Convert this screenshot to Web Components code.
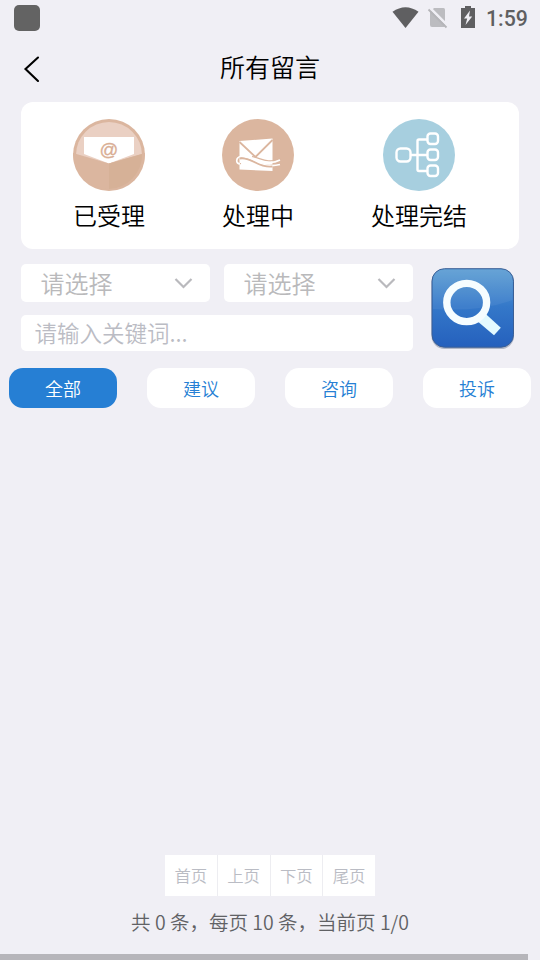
<!DOCTYPE html>
<html lang="zh-CN">
<head>
<meta charset="utf-8">
<title>所有留言</title>
<style>
html,body{margin:0;height:100%}
body{background:#f0eff5;font-family:"Noto Sans CJK SC","Noto Sans",sans-serif;font-weight:350;color:#000;overflow:hidden}
</style>
</head>
<body>
<message-page></message-page>
<script>
const define = (name, css, html) => customElements.define(name, class extends HTMLElement {
  constructor() {
    super();
    const t = document.createElement('template');
    t.innerHTML = `<style>*{box-sizing:border-box}svg{display:block;flex:none}${css}</style>${html}`;
    this.attachShadow({mode: 'open'}).append(t.content.cloneNode(true));
  }
});

define('status-bar', `
:host{display:flex;height:36px;padding:0 12px 0 14px;align-items:center;justify-content:space-between;box-sizing:border-box}
.app{width:26px;height:26px;border-radius:5px;background:#636363}
.right{display:flex;align-items:center}
.time{font:500 21.300px/36px Roboto,sans-serif;color:#5f5f61;width:42px;white-space:nowrap;padding-top:1px}
`, `
<div class="app"></div>
<div class="right">
<svg width="94" height="36" viewBox="392 0 94 36">
<path d="M392.500 11.700Q405.500 2.700 418.500 11.700L405.500 28Z" fill="#5f5f61"/>
<path d="M434 8H443.500Q445 8 445 9.500V25.500Q445 27 443.500 27H432Q430 27 430 25V12Z" fill="#bcbcc0"/>
<path d="M430 8L449 27" stroke="#f0eff5" stroke-width="2.500"/><path d="M428.500 9.500L446.500 27.500" stroke="#b5b5b9" stroke-width="1.800"/>
<path d="M465 6H471V8H475V28H461V8H465Z" fill="#5f5f61"/>
<path d="M470 10.500L464 18.500H467.200L465.500 25L472.200 16.500H469Z" fill="#f0eff5"/>
</svg><span class="time">1:59</span></div>`);

define('page-header', `
:host{display:grid;grid-template-columns:60px 1fr 60px;height:66px;align-items:center}
h1{margin:0;font-size:25px;line-height:61px;font-weight:inherit;text-align:center;height:66px}
`, `<svg width="60" height="66" viewBox="0 36 60 66"><path d="M38 57.500L25.500 69L38 81" fill="none" stroke="#000" stroke-width="2.100" stroke-linecap="round"/></svg><h1><slot></slot></h1>`);

define('stat-item', `
:host{display:flex;flex-direction:column;align-items:center}
.label{font-size:24px;line-height:36px;margin-top:6px}
`, `<slot name="icon"></slot><span class="label"><slot></slot></span>`);

define('stat-card', `
:host{display:flex;justify-content:space-between;margin:0 21px;height:147px;padding:17px 52px 0;background:#fff;border-radius:12px;box-sizing:border-box}
`, `
<stat-item><svg slot="icon" width="72" height="72" viewBox="0 0 72 72">
<circle cx="36" cy="36" r="36" fill="#dbb69f"/><path d="M3 36A33 33 0 0 1 69 36L36 46Z" fill="#ead0c3"/>
<path d="M11 18H61V35L36 44.500L11 35Z" fill="#fff"/>
<path d="M0 34L36 44.500L72 34A36 36 0 0 1 0 34Z" fill="#dbb69f"/><path d="M36 44.500L69 35A34 34 0 0 1 36 70Z" fill="#d6b197"/>
<text x="36" y="36.500" text-anchor="middle" font-family="Liberation Sans,sans-serif" font-weight="400" font-size="18.500" fill="#d9ae94" stroke="#d9ae94" stroke-width=".3">@</text>
</svg>已受理</stat-item>
<stat-item><svg slot="icon" width="72" height="72" viewBox="0 0 72 72">
<circle cx="36" cy="36" r="36" fill="#dbb69f"/>
<path d="M17.500 22L50.500 19.500V52L17.500 50.500Z" fill="#fff"/>
<path d="M17.500 23L33.500 38L50.500 21" fill="none" stroke="#dbb69f" stroke-width="1.800"/>
<path d="M19 44.500C13.500 46 13 38.500 19 38.500C31 38 38 51 58 44.500L58 40C45 45 39 39 30 37.500" fill="none" stroke="#dbb69f" stroke-width="1.200"/>
<path d="M18 45C13.500 45 13.500 38 19 37.500C30 36.500 38 50.500 58 45.500" fill="none" stroke="#fff" stroke-width="1.700"/>
<path d="M18 39.500C30 37.500 36 49.500 50.500 47.500" fill="none" stroke="#dbb69f" stroke-width="1.900"/>
<path d="M44 43Q51 44.500 58 41" fill="none" stroke="#fff" stroke-width="1.600"/>
</svg>处理中</stat-item>
<stat-item><svg slot="icon" width="72" height="72" viewBox="0 0 72 72">
<circle cx="36" cy="36" r="36" fill="#a7cfdf"/>
<g fill="none" stroke="#fff" stroke-width="2.400"><rect x="13.500" y="29.500" width="14" height="13" rx="4"/><rect x="44.500" y="14.500" width="10.500" height="10.500" rx="3"/><rect x="44.500" y="30.500" width="10.500" height="10.500" rx="3"/><rect x="44.500" y="46.500" width="10.500" height="10.500" rx="3"/><path d="M28 36H44M44 20.500H36Q34.500 20.500 34.500 22V50.500Q34.500 52 36 52H44"/></g>
</svg>处理完结</stat-item>`);

define('select-box', `
:host{display:flex;align-items:center;justify-content:space-between;background:#fff;border-radius:5px;height:38px;padding:0 16px 0 19.500px;color:#b9b9bb;font-size:24px;line-height:38px;box-sizing:border-box}
`, `<span><slot></slot></span><svg width="20" height="14" viewBox="0 0 20 14"><path d="M1.500 3L9.500 11L17.500 3" fill="none" stroke="#b9b9bd" stroke-width="2.200"/></svg>`);

define('search-panel', `
:host{display:flex;margin:15px 21px 0;height:87px}
.fields{display:grid;grid-template-columns:189px 189px;grid-template-rows:38px 36px;gap:13px 14px}
.kw{grid-column:1/3;background:#fff;border-radius:5px;padding-left:13.500px;font-size:22.500px;line-height:35px;color:#bbbcc4}
.go{margin:1px 0 0 14px}
`, `
<div class="fields"><select-box>请选择</select-box><select-box>请选择</select-box><div class="kw">请输入关键词...</div></div>
<svg class="go" width="92" height="90" viewBox="427 265 92 90">
<defs><linearGradient id="b" x1="0" y1="0" x2="0" y2="1"><stop offset="0" stop-color="#5f9fd4"/><stop offset=".48" stop-color="#3478c9"/><stop offset="1" stop-color="#2560bd"/></linearGradient></defs>
<rect x="431.500" y="269" width="82.500" height="80" rx="13" fill="#65738f" opacity=".45"/>
<rect x="432" y="268.700" width="81.500" height="78.500" rx="12.500" fill="url(#b)" stroke="#3a5f96" stroke-width="1"/>
<path d="M433 309V281Q433 270 444 270H501.500Q512.500 270 512.500 281V300Q480 312 433 309Z" fill="#fff" opacity=".06"/>
<path d="M478 321.700L494 335.300L500.800 327.700L485.500 313.800Z" fill="#e3faff"/>
<ellipse cx="466.700" cy="302.500" rx="19.900" ry="19.100" fill="none" stroke="#f6fdff" stroke-width="7.400"/>
</svg>`);

define('tab-pill', `
:host{display:block;width:108px;height:40px;border-radius:14px;background:#fff;color:#267fd4;font-size:18px;line-height:40px;text-align:center}
:host([active]){background:#267fd4;color:#fff}
`, `<slot></slot>`);

define('tab-row', `:host{display:flex;justify-content:space-between;margin:17px 9px 0}`, `<slot></slot>`);

define('page-nav', `
:host{display:flex;flex-direction:column;align-items:center;margin-top:auto;height:99px}
.b{display:flex;width:210px;height:41px;background:#fff}
.b span{flex:1;color:#babcc4;font-size:16.400px;line-height:41px;text-align:center}
.b span+span{border-left:1px solid #ededf1}
.info{font-size:19.500px;line-height:28px;margin-top:12px;color:#606164;white-space:nowrap}
`, `<div class="b"><span>首页</span><span>上页</span><span>下页</span><span>尾页</span></div><div class="info"><slot></slot></div>`);

define('message-page', `
:host{display:flex;flex-direction:column;width:540px;height:960px}
.bar{height:6px;width:528px;background:#b6b5ba}
`, `
<status-bar></status-bar>
<page-header>所有留言</page-header>
<stat-card></stat-card>
<search-panel></search-panel>
<tab-row><tab-pill active>全部</tab-pill><tab-pill>建议</tab-pill><tab-pill>咨询</tab-pill><tab-pill>投诉</tab-pill></tab-row>
<page-nav>共 0 条，每页 10 条，当前页 1/0</page-nav>
<div class="bar"></div>`);
</script>
</body>
</html>
